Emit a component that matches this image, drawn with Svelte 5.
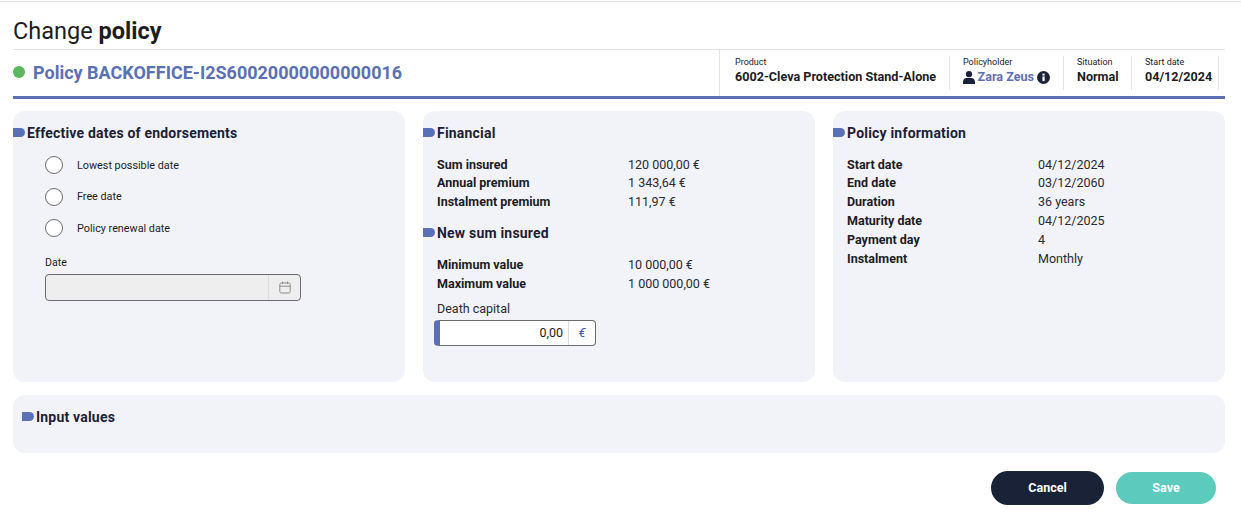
<script>
	const financial = [
		['Sum insured', '120 000,00 €'],
		['Annual premium', '1 343,64 €'],
		['Instalment premium', '111,97 €']
	];
	const limits = [
		['Minimum value', '10 000,00 €'],
		['Maximum value', '1 000 000,00 €']
	];
	const info = [
		['Start date', '04/12/2024'],
		['End date', '03/12/2060'],
		['Duration', '36 years'],
		['Maturity date', '04/12/2025'],
		['Payment day', '4'],
		['Instalment', 'Monthly']
	];
	const dateOptions = ['Lowest possible date', 'Free date', 'Policy renewal date'];
</script>

<div class="top-rule"></div>
<div class="page">
	<h1>Change <b>policy</b></h1>

	<header class="policy-bar">
		<div class="policy-name">
			<span class="status-dot"></span>
			<span>Policy BACKOFFICE-I2S60020000000000016</span>
		</div>
		<div class="meta">
			<div class="meta-item first">
				<span class="meta-label">Product</span>
				<span class="meta-value">6002-Cleva Protection Stand-Alone</span>
			</div>
			<div class="meta-item holder">
				<span class="meta-label">Policyholder</span>
				<span class="meta-value person">
					<svg width="12" height="13" viewBox="0 0 12 13" fill="#1a2238">
						<circle cx="6" cy="3.2" r="3.1" />
						<path d="M0 13v-2.2C0 8.6 1.8 7 3.6 7h4.8c1.8 0 3.6 1.6 3.6 3.8V13z" />
					</svg>
					<span class="link">Zara Zeus</span>
					<svg width="13" height="13" viewBox="0 0 12 12">
						<circle cx="6" cy="6" r="6" fill="#1a2238" />
						<rect x="5" y="5" width="2.1" height="4.4" fill="#fff" />
						<rect x="5" y="2.4" width="2.1" height="1.8" fill="#fff" />
					</svg>
				</span>
			</div>
			<div class="meta-item situation">
				<span class="meta-label">Situation</span>
				<span class="meta-value">Normal</span>
			</div>
			<div class="meta-item start">
				<span class="meta-label">Start date</span>
				<span class="meta-value">04/12/2024</span>
			</div>
		</div>
	</header>

	<div class="panels">
		<section class="panel">
			<h2 class="section-title"><span class="tag"></span>Effective dates of endorsements</h2>
			<div class="options">
				{#each dateOptions as option}
					<label class="option">
						<span class="radio"></span>
						<span>{option}</span>
					</label>
				{/each}
			</div>
			<div class="date-field">
				<span class="field-label">Date</span>
				<div class="date-input">
					<span class="date-fill"></span>
					<span class="date-btn">
						<svg width="12" height="13" viewBox="0 0 12 13" fill="none" stroke="#8b8b8b" stroke-width="1">
							<rect x="0.8" y="2" width="10.4" height="10" rx="1.5" />
							<path d="M0.8 5.2h10.4M3.5 0.5v2.5M8.5 0.5v2.5" />
						</svg>
					</span>
				</div>
			</div>
		</section>

		<section class="panel">
			<h2 class="section-title"><span class="tag"></span>Financial</h2>
			<dl class="rows">
				{#each financial as [label, value]}
					<dt>{label}</dt>
					<dd>{value}</dd>
				{/each}
			</dl>
			<h2 class="section-title second"><span class="tag"></span>New sum insured</h2>
			<dl class="rows limits">
				{#each limits as [label, value]}
					<dt>{label}</dt>
					<dd>{value}</dd>
				{/each}
			</dl>
			<div class="capital">
				<span class="capital-label">Death capital</span>
				<div class="capital-input">
					<span class="capital-value">0,00</span>
					<span class="capital-unit">€</span>
				</div>
			</div>
		</section>

		<section class="panel">
			<h2 class="section-title"><span class="tag"></span>Policy information</h2>
			<dl class="rows">
				{#each info as [label, value]}
					<dt>{label}</dt>
					<dd>{value}</dd>
				{/each}
			</dl>
		</section>
	</div>

	<section class="panel input-values">
		<h2 class="section-title"><span class="tag"></span>Input values</h2>
	</section>

	<div class="actions">
		<button class="cancel">Cancel</button>
		<button class="save">Save</button>
	</div>
</div>

<style>
	:global(body) {
		background: #fff;
	}

	.top-rule {
		height: 1px;
		margin-top: 1px;
		background: #e4e4e6;
	}

	.page {
		box-sizing: border-box;
		width: 1241px;
		height: 518px;
		overflow: hidden;
		padding: 0 16px 0 13px;
		font-family: Roboto, 'Liberation Sans', sans-serif;
		color: #1a2238;
	}

	h1 {
		margin: 0;
		height: 47px;
		line-height: 58px;
		font-size: 23.5px;
		font-weight: 400;
		color: #1c1c22;
		border-bottom: 1px solid #e4e4e6;
		box-sizing: content-box;
	}

	h1 b {
		font-weight: 700;
	}

	.policy-bar {
		display: flex;
		justify-content: space-between;
		height: 46px;
		border-bottom: 3px solid #5a70b6;
	}

	.policy-name {
		display: flex;
		align-items: center;
		gap: 8px;
		height: 44px;
		font-size: 18px;
		font-weight: 700;
		color: #5a70b6;
	}

	.status-dot {
		width: 12px;
		height: 12px;
		border-radius: 50%;
		background: #5cb85c;
	}

	.meta {
		display: flex;
		height: 46px;
		padding-right: 6px;
		border-left: 1px solid #e4e4e6;
	}

	.meta-item {
		display: flex;
		flex-direction: column;
		box-sizing: border-box;
		height: 34px;
		margin-top: 6px;
		padding: 0 0 0 13px;
		border-left: 1px solid #e4e4e6;
		white-space: nowrap;
	}

	.meta-item.first {
		width: 229px;
		padding-left: 15px;
		border-left: none;
	}

	.meta-item.holder {
		width: 114px;
	}

	.meta-item.situation {
		width: 68px;
	}

	.meta-item.start {
		width: 88px;
		border-right: 1px solid #e4e4e6;
	}

	.meta-label {
		font-size: 9px;
		line-height: 12px;
		color: #1c1c22;
	}

	.meta-value {
		margin-top: 1px;
		font-size: 12.6px;
		line-height: 16px;
		font-weight: 700;
		color: #1c1c22;
	}

	.person {
		display: flex;
		align-items: center;
		gap: 2.5px;
	}

	.link {
		color: #5f6fb6;
	}

	.panels {
		display: grid;
		grid-template-columns: repeat(3, 392px);
		gap: 18px;
		margin-top: 12px;
	}

	.panel {
		box-sizing: border-box;
		height: 271px;
		padding: 13px 14px;
		border-radius: 12px;
		background: #f2f3f9;
	}

	.section-title {
		position: relative;
		margin: 0;
		font-size: 14px;
		line-height: 18px;
		font-weight: 700;
		letter-spacing: 0.2px;
		color: #1a2238;
	}

	.section-title.second {
		margin-top: 13px;
	}

	.tag {
		position: absolute;
		left: -14px;
		top: 4px;
		width: 12px;
		height: 9px;
		background: #5a70b6;
		border-radius: 0 4.5px 4.5px 0;
	}

	.options {
		display: flex;
		flex-direction: column;
		gap: 13.5px;
		margin: 14px 0 0 18px;
	}

	.option {
		display: flex;
		align-items: center;
		gap: 14px;
		height: 18px;
		font-size: 10.8px;
		color: #1c1c22;
	}

	.radio {
		box-sizing: border-box;
		width: 18px;
		height: 18px;
		border: 1px solid #6b6b70;
		border-radius: 50%;
		background: #fff;
	}

	.date-field {
		margin: 19px 0 0 18px;
	}

	.field-label {
		display: block;
		font-size: 10.6px;
		line-height: 14px;
		color: #1c1c22;
	}

	.date-input {
		display: flex;
		box-sizing: border-box;
		width: 256px;
		height: 27px;
		margin-top: 4px;
		border: 1px solid #6b6b70;
		border-radius: 4px;
		background: #eeeeee;
	}

	.date-fill {
		flex: 1;
	}

	.date-btn {
		display: flex;
		align-items: center;
		justify-content: center;
		width: 31px;
		border-left: 1px solid #dcdcdc;
	}

	.rows {
		display: grid;
		grid-template-columns: 191px 1fr;
		grid-auto-rows: 18.8px;
		margin: 12.6px 0 0;
		font-size: 12.5px;
		line-height: 19px;
		color: #1c1c22;
	}

	.rows.limits {
		grid-auto-rows: 19.4px;
	}

	dt {
		font-weight: 700;
	}

	dd {
		margin: 0;
		color: #2a2a30;
	}

	.capital {
		margin-top: 7.8px;
	}

	.capital-label {
		display: block;
		font-size: 12.5px;
		line-height: 16px;
		color: #2a2a30;
	}

	.capital-input {
		display: flex;
		box-sizing: border-box;
		width: 162px;
		height: 26px;
		margin: 3px 0 0 -3px;
		background: #fff;
		border: 1px solid #6b6b70;
		border-left: 6px solid #5a70b6;
		border-radius: 4px;
	}

	.capital-value {
		flex: 1;
		padding-right: 5px;
		text-align: right;
		font-size: 12.5px;
		line-height: 24px;
		color: #1c1c22;
	}

	.capital-unit {
		width: 26px;
		text-align: center;
		border-left: 1px solid #dcdcdc;
		font-size: 13px;
		line-height: 24px;
		font-style: italic;
		color: #3f56b4;
	}

	.input-values {
		height: 58px;
		margin-top: 13px;
		padding: 13px 23px;
	}

	.actions {
		display: flex;
		justify-content: flex-end;
		align-items: center;
		gap: 12px;
		margin-top: 18px;
		padding-right: 9px;
	}

	button {
		border: none;
		padding: 0 0 1px;
		font-family: inherit;
		font-size: 12.5px;
		font-weight: 700;
		color: #fff;
		border-radius: 17px;
	}

	.cancel {
		width: 113px;
		height: 34px;
		background: #1a2238;
	}

	.save {
		width: 100px;
		height: 32px;
		background: #5ccabd;
	}
</style>
